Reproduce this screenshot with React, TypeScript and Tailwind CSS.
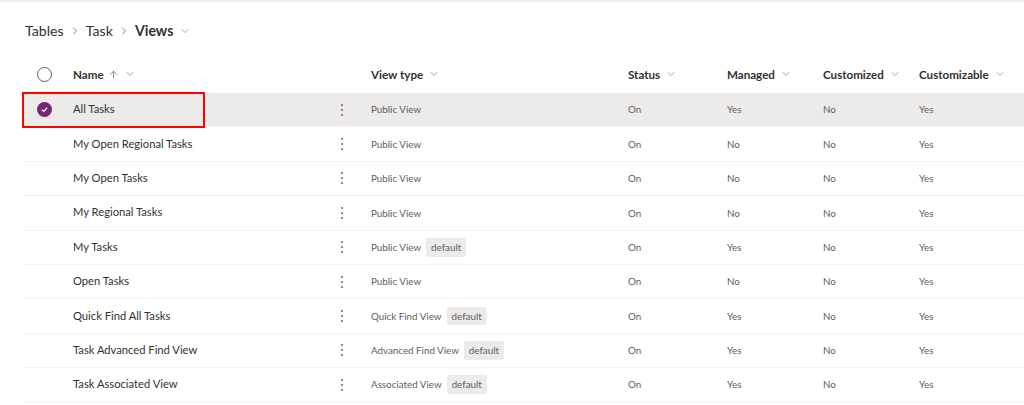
import { ChevronDown, ChevronRight, ArrowUp } from "lucide-react";

type Row = {
  name: string;
  type: string;
  isDefault?: boolean;
  managed: string;
};

const rows: Row[] = [
  { name: "All Tasks", type: "Public View", managed: "Yes" },
  { name: "My Open Regional Tasks", type: "Public View", managed: "No" },
  { name: "My Open Tasks", type: "Public View", managed: "No" },
  { name: "My Regional Tasks", type: "Public View", managed: "No" },
  { name: "My Tasks", type: "Public View", isDefault: true, managed: "Yes" },
  { name: "Open Tasks", type: "Public View", managed: "No" },
  { name: "Quick Find All Tasks", type: "Quick Find View", isDefault: true, managed: "Yes" },
  { name: "Task Advanced Find View", type: "Advanced Find View", isDefault: true, managed: "Yes" },
  { name: "Task Associated View", type: "Associated View", isDefault: true, managed: "Yes" },
];

const cols = "grid grid-cols-[49px_257px_41px_257px_99px_96px_96px_1fr] items-center";

function Kebab() {
  return (
    <div className="flex flex-col gap-[3px] pl-[11px]">
      <span className="w-[2px] h-[2px] rounded-full bg-[#8a4a8a]" />
      <span className="w-[2px] h-[2px] rounded-full bg-[#8a4a8a]" />
      <span className="w-[2px] h-[2px] rounded-full bg-[#8a4a8a]" />
    </div>
  );
}

function HeaderCell({ label, sort }: { label: string; sort?: boolean }) {
  return (
    <div className="flex items-center gap-[5px] text-[11.6px] font-bold text-[#323130]">
      <span>{label}</span>
      {sort && <ArrowUp size={11} strokeWidth={1.5} className="text-[#605e5c] -ml-[1px]" />}
      <ChevronDown size={12} strokeWidth={1.5} className="text-[#8a8886]" />
    </div>
  );
}

export default function App() {
  return (
    <div
      className="w-[1024px] h-[405px] bg-white overflow-hidden border-t-2 border-[#f0f0f0]"
      style={{ fontFamily: 'Lato, "Open Sans", sans-serif' }}
    >
      <div className="flex items-center gap-[4px] pl-[25px] pt-[15px] h-[42px] text-[14.2px] text-[#323130]">
        <span>Tables</span>
        <ChevronRight size={12} strokeWidth={1.5} className="text-[#605e5c] mx-[1px]" />
        <span>Task</span>
        <ChevronRight size={12} strokeWidth={1.5} className="text-[#605e5c] mx-[1px]" />
        <span className="font-bold">Views</span>
        <ChevronDown size={12} strokeWidth={1.5} className="text-[#8a8886] ml-[2px]" />
      </div>

      <div className="ml-[24px] mt-[12px]">
        <div className={`${cols} h-[37px]`}>
          <div className="pl-[13px]">
            <div className="w-[15px] h-[15px] rounded-full border border-[#605e5c]" />
          </div>
          <HeaderCell label="Name" sort />
          <div />
          <HeaderCell label="View type" />
          <HeaderCell label="Status" />
          <HeaderCell label="Managed" />
          <HeaderCell label="Customized" />
          <HeaderCell label="Customizable" />
        </div>

        {rows.map((r, i) => {
          const selected = i === 0;
          return (
            <div
              key={r.name}
              className={`${cols} h-[34.4px] border-b border-[#f3f2f1] relative ${selected ? "bg-[#edebe9]" : ""}`}
            >
              {selected && (
                <div className="absolute left-[-2px] top-[-1px] w-[183px] h-[36px] border-2 border-[#ff0000] pointer-events-none" />
              )}
              <div className="pl-[13px]">
                {selected && (
                  <div className="w-[15px] h-[15px] rounded-full bg-[#742774] flex items-center justify-center">
                    <svg width="9" height="9" viewBox="0 0 10 10">
                      <path d="M2 5.2 L4.2 7.2 L8 3" fill="none" stroke="white" strokeWidth="1.3" />
                    </svg>
                  </div>
                )}
              </div>
              <div className="text-[11.2px] text-[#323130]">{r.name}</div>
              <Kebab />
              <div className="flex items-center gap-[5px] text-[9.8px] text-[#605e5c]">
                <span>{r.type}</span>
                {r.isDefault && (
                  <span className="bg-[#edebe9] px-[5px] py-[2px] rounded-[2px] text-[#605e5c]">default</span>
                )}
              </div>
              <div className="text-[9.8px] text-[#605e5c]">On</div>
              <div className="text-[9.8px] text-[#605e5c]">{r.managed}</div>
              <div className="text-[9.8px] text-[#605e5c]">No</div>
              <div className="text-[9.8px] text-[#605e5c]">Yes</div>
            </div>
          );
        })}
      </div>
    </div>
  );
}
